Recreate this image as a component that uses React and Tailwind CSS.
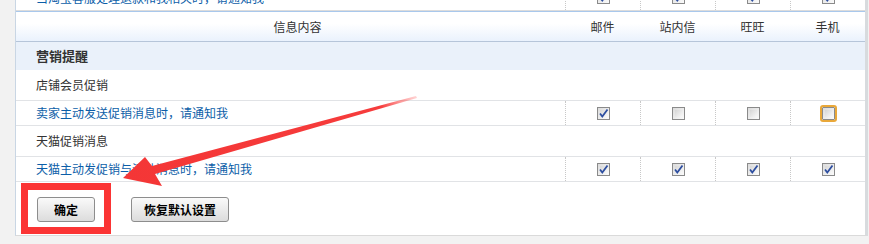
import React from "react";

const FONT = { fontFamily: '"Noto Sans CJK SC", "Noto Sans", sans-serif' };

function Check({ checked, focus }) {
  return (
    <span
      className={
        "relative inline-flex w-[13px] h-[13px] items-center justify-center border bg-gradient-to-br from-[#dcdcdc] to-[#fbfbfb] " +
        (focus
          ? "border-[#8a8a8a] outline outline-2 outline-[#e9a83a] rounded-[1px]"
          : "border-[#8a8a8a]")
      }
    >
      <span className="absolute inset-[2px] bg-gradient-to-br from-[#d6d6d6] to-[#f8f8f8]" />
      {checked && (
        <svg width="11" height="11" viewBox="0 0 11 11" className="relative">
          <path d="M2 5.5 L4.3 8.5 L9.5 1.5" fill="none" stroke="#2d4ea0" strokeWidth="1.8" />
        </svg>
      )}
    </span>
  );
}

function Cells({ states }) {
  return (
    <>
      {states.map((s, i) => (
        <div
          key={i}
          className="w-[75px] flex items-center justify-center border-l border-dotted border-[#c8c8c8]"
        >
          <Check checked={s === 1} focus={s === 2} />
        </div>
      ))}
    </>
  );
}

function LinkRow({ text, states, extra = "" }) {
  return (
    <div className={"flex h-[25px] border-b border-[#e1e3e6] " + extra}>
      <div className="w-[549px] pl-[20px] flex items-center text-[12px] text-[#0c5ea8]">{text}</div>
      <Cells states={states} />
    </div>
  );
}

function TitleRow({ text }) {
  return (
    <div className="h-[31px] border-b border-[#e1e3e6] pl-[20px] flex items-center text-[12px] text-[#333]">
      {text}
    </div>
  );
}

export default function App() {
  return (
    <div className="relative w-[869px] h-[244px] bg-[#f2f2f2] overflow-hidden" style={FONT}>
      <div className="ml-[15px] w-[853px] h-[236px] bg-white border-l border-[#c9d6e4] border-r-[3px] border-r-[#d8dbde] border-b border-b-[#dadada]">
        {/* clipped top row */}
        <div className="h-[11px] overflow-hidden border-b border-[#dcdcdc]">
          <div className="-mt-[15px]">
            <div className="flex h-[25px]">
              <div className="w-[549px] pl-[20px] flex items-center text-[12px] text-[#0c5ea8]">
                当淘宝客服处理退款和我相关时，请通知我
              </div>
              <Cells states={[1, 1, 1, 1]} />
            </div>
          </div>
        </div>
        {/* header */}
        <div className="flex h-[31px] border-t border-[#a9c8ec] border-b border-b-[#b6c5d9] bg-gradient-to-b from-white from-40% to-[#eaf2fd] text-[12px] text-[#333]">
          <div className="w-[549px] flex items-center justify-center pl-[14px]">信息内容</div>
          <div className="w-[75px] flex items-center justify-center">邮件</div>
          <div className="w-[75px] flex items-center justify-center">站内信</div>
          <div className="w-[75px] flex items-center justify-center">旺旺</div>
          <div className="w-[75px] flex items-center justify-center">手机</div>
        </div>
        {/* section */}
        <div className="h-[28px] bg-[#eaf1fa] pl-[20px] flex items-center text-[13px] font-bold text-[#333]">
          营销提醒
        </div>
        <TitleRow text="店铺会员促销" />
        <LinkRow text="卖家主动发送促销消息时，请通知我" states={[1, 0, 0, 2]} />
        <TitleRow text="天猫促销消息" />
        <LinkRow text="天猫主动发促销与活动消息时，请通知我" states={[1, 1, 1, 1]} />
        {/* buttons */}
        <div className="flex items-start pl-[21px] pt-[15px] gap-[36px]">
          <button className="w-[58px] h-[25px] rounded-[3px] border border-[#8d8d8d] bg-gradient-to-b from-[#fafafa] to-[#dcdcdc] text-[12px] font-bold text-black">
            确定
          </button>
          <button className="w-[98px] h-[25px] rounded-[3px] border border-[#8d8d8d] bg-gradient-to-b from-[#fafafa] to-[#dcdcdc] text-[12px] font-bold text-black">
            恢复默认设置
          </button>
        </div>
      </div>

      {/* annotation: red box */}
      <div className="absolute left-[21px] top-[183px] w-[90px] h-[51px] border-[7px] border-[#fb3434] pointer-events-none" />
      {/* annotation: arrow */}
      <svg className="absolute left-0 top-0 pointer-events-none" width="869" height="244">
        <defs>
          <linearGradient id="ag" x1="416" y1="97" x2="123" y2="178" gradientUnits="userSpaceOnUse">
            <stop offset="0" stopColor="#ff6a6a" stopOpacity="0.3" />
            <stop offset="0.12" stopColor="#f63c3c" />
            <stop offset="1" stopColor="#f43636" />
          </linearGradient>
        </defs>
        <polygon
          points="416,96 417,98 155,174 162,186 123,178 145,157 152,166"
          fill="url(#ag)"
        />
      </svg>
    </div>
  );
}
